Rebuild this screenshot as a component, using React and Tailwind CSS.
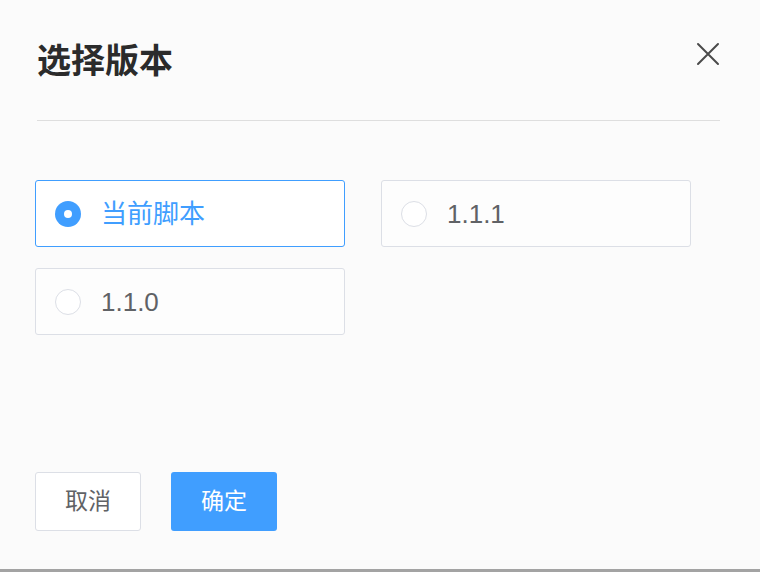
import React, { useState } from "react";

const versions = [
  { id: "current", label: "当前脚本" },
  { id: "1.1.1", label: "1.1.1" },
  { id: "1.1.0", label: "1.1.0" },
];

const CloseIcon = () => (
  <svg width="24" height="24" viewBox="0 0 24 24" fill="none">
    <path d="M2 2L22 22M22 2L2 22" stroke="#4a4a4a" strokeWidth="2" strokeLinecap="round" />
  </svg>
);

const Radio = ({ checked }) =>
  checked ? (
    <span className="w-[26px] h-[26px] rounded-full bg-[#409eff] flex items-center justify-center shrink-0">
      <span className="w-[8px] h-[8px] rounded-full bg-white" />
    </span>
  ) : (
    <span className="w-[26px] h-[26px] rounded-full border border-[#dcdfe6] bg-white shrink-0" />
  );

export default function App() {
  const [selected, setSelected] = useState("current");

  return (
    <div
      className="w-[760px] h-[572px] bg-[#fbfbfb] flex flex-col border-b-[3px] border-[#a3a3a3] overflow-hidden"
      style={{ fontFamily: '"Liberation Sans", "Noto Sans CJK SC", sans-serif' }}
    >
      {/* Header */}
      <div className="ml-[37px] mr-[40px] pt-[39px] flex items-center justify-between h-[121px] border-b border-[#dedede] pb-[38px]">
        <h2 className="text-[34px] leading-[44px] font-bold text-[#2b2b2b]">选择版本</h2>
        <button className="mr-0 -mt-[14px]">
          <CloseIcon />
        </button>
      </div>

      {/* Options */}
      <div className="mt-[59px] ml-[35px] grid grid-cols-[310px_310px] gap-x-[36px] gap-y-[21px]">
        {versions.map((v) => {
          const active = selected === v.id;
          return (
            <div
              key={v.id}
              onClick={() => setSelected(v.id)}
              className={`h-[67px] flex items-center gap-[20px] pl-[19px] rounded-[3px] border cursor-pointer ${
                active ? "border-[#409eff] bg-white" : "border-[#dcdfe6] bg-[#fdfdfd]"
              }`}
            >
              <Radio checked={active} />
              <span className={`text-[26px] leading-none ${active ? "text-[#409eff]" : "text-[#606266]"}`}>
                {v.label}
              </span>
            </div>
          );
        })}
      </div>

      {/* Footer */}
      <div className="mt-auto mb-[38px] ml-[35px] flex gap-[30px]">
        <button className="w-[106px] h-[59px] rounded-[3px] border border-[#dcdfe6] bg-white text-[23px] text-[#606266]">
          取消
        </button>
        <button className="w-[106px] h-[59px] rounded-[3px] bg-[#409eff] text-[23px] text-white">
          确定
        </button>
      </div>
    </div>
  );
}
